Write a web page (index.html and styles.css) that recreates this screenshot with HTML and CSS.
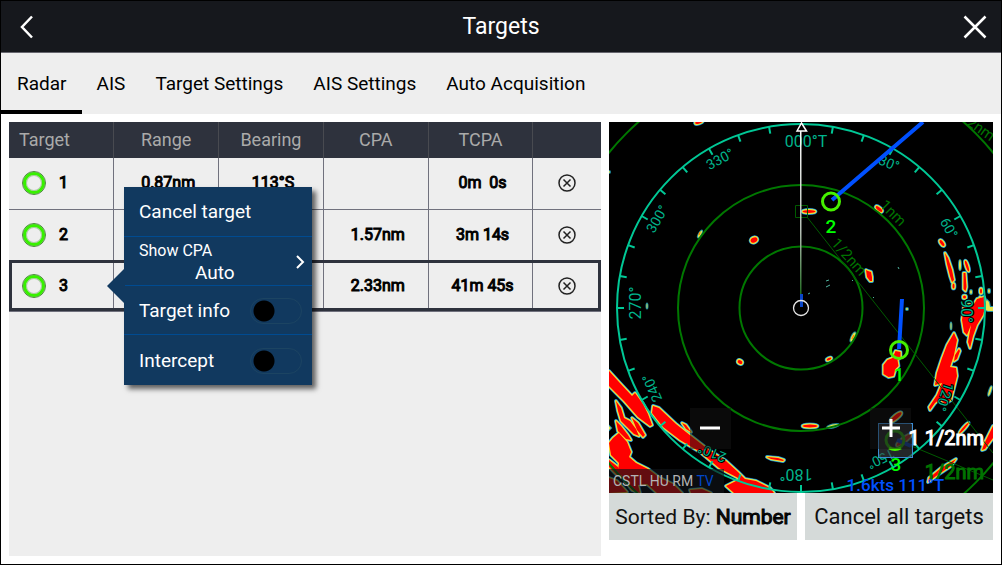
FILE: index.html
```html
<!DOCTYPE html>
<html lang="en">
<head>
<meta charset="utf-8">
<title>Targets</title>
<link rel="stylesheet" href="styles.css">
</head>
<body>
<header class="topbar">
  <button class="icon-btn" aria-label="Back"><svg width="36" height="36" viewBox="0 0 36 36"><path d="M23 7.500L13 18l10 10.500" fill="none" stroke="#fff" stroke-width="2.500"/></svg></button>
  <h1>Targets</h1>
  <button class="icon-btn" aria-label="Close"><svg width="36" height="36" viewBox="0 0 36 36"><path d="M7.500 7.500l21 21M28.500 7.500l-21 21" fill="none" stroke="#fff" stroke-width="2.500"/></svg></button>
</header>
<nav class="tabs">
  <a class="tab active" href="#radar">Radar</a>
  <a class="tab" href="#ais">AIS</a>
  <a class="tab" href="#target-settings">Target Settings</a>
  <a class="tab" href="#ais-settings">AIS Settings</a>
  <a class="tab" href="#auto">Auto Acquisition</a>
</nav>
<main class="content">
  <section class="list">
    <table class="targets">
      <colgroup><col class="data"><col class="data"><col class="data"><col class="data"><col class="data"><col></colgroup>
      <thead><tr><th class="first">Target</th><th>Range</th><th>Bearing</th><th>CPA</th><th>TCPA</th><th></th></tr></thead>
      <tbody>
        <tr>
          <td><span class="target"><i class="ring"></i>1</span></td><td>0.87nm</td><td>113°S</td><td></td><td>0m&nbsp; 0s</td>
          <td><button class="remove" aria-label="Cancel target 1"><svg width="18" height="18" viewBox="0 0 18 18"><circle cx="9" cy="9" r="8"/><path d="M5.500 5.500l7 7M12.500 5.500l-7 7"/></svg></button></td>
        </tr>
        <tr>
          <td><span class="target"><i class="ring"></i>2</span></td><td></td><td></td><td>1.57nm</td><td>3m 14s</td>
          <td><button class="remove" aria-label="Cancel target 2"><svg width="18" height="18" viewBox="0 0 18 18"><circle cx="9" cy="9" r="8"/><path d="M5.500 5.500l7 7M12.500 5.500l-7 7"/></svg></button></td>
        </tr>
        <tr class="selected">
          <td><span class="target"><i class="ring"></i>3</span></td><td></td><td></td><td>2.33nm</td><td>41m 45s</td>
          <td><button class="remove" aria-label="Cancel target 3"><svg width="18" height="18" viewBox="0 0 18 18"><circle cx="9" cy="9" r="8"/><path d="M5.500 5.500l7 7M12.500 5.500l-7 7"/></svg></button></td>
        </tr>
      </tbody>
    </table>
    <div class="popup">
      <button class="item">Cancel target</button>
      <button class="item cpa"><span class="stack"><small>Show CPA</small><span class="value">Auto</span></span><svg width="10" height="16" viewBox="0 0 10 16"><path d="M2 2l6 6-6 6" fill="none" stroke="#fff" stroke-width="2"/></svg></button>
      <label class="item">Target info<input class="switch" type="checkbox"></label>
      <label class="item">Intercept<input class="switch" type="checkbox"></label>
    </div>
  </section>
  <section class="side">
    <div class="radar">
      <svg class="scope" viewBox="609 122 384 371">
        <defs>
          <linearGradient id="heading" gradientUnits="userSpaceOnUse" x1="0" y1="130" x2="0" y2="300"><stop offset="0" stop-color="#fff"/><stop offset=".6" stop-color="#b4beb4"/><stop offset="1" stop-color="#146414"/></linearGradient>
          <g id="echoes">
            <ellipse cx="699" cy="122" rx="4" ry="1.500" transform="rotate(-20 699 122)"/>
            <ellipse cx="754" cy="240" rx="3.500" ry="2.500" transform="rotate(-25 754 240)"/>
            <ellipse cx="809" cy="211.500" rx="6.500" ry="1.500"/>
            <ellipse cx="879" cy="209" rx="4" ry="1.500" transform="rotate(40 879 209)"/>
            <path d="M866 270l2 1 3 1 1 5 0 4-2 0-3-4z"/>
            <ellipse cx="942" cy="243" rx="1.500" ry="3.500" transform="rotate(-35 942 243)"/>
            <path d="M945 253l3 5 4 12 2 10-2 2-2-6-3-12z"/>
            <ellipse cx="953.500" cy="286" rx="1" ry="2.500"/>
            <ellipse cx="967" cy="266" rx="1.200" ry="5.500" transform="rotate(-18 967 266)"/>
            <path d="M963.500 273l2 0 1 14-1 4-2-2z"/>
            <circle cx="964.500" cy="297" r="1.500"/>
            <ellipse cx="981" cy="291" rx="1" ry="2.500"/>
            <ellipse cx="740" cy="362" rx="2.500" ry="1.800" transform="rotate(30 740 362)"/>
            <path d="M767 457l11 1 6 2-1 1-12-2z"/>
            <ellipse cx="810" cy="426" rx="7.500" ry="1.500"/>
            <ellipse cx="829" cy="359" rx="2.500" ry="1" transform="rotate(-25 829 359)"/>
            <path d="M883.500 374l0-9 4-5 5-2 3-7 5 1 0 5-3 3 1 6-3 3-2 7-5 1z"/>
            <ellipse cx="896" cy="417" rx="7" ry="2" transform="rotate(-40 896 417)"/>
            <ellipse cx="904" cy="440" rx="9" ry="2" transform="rotate(-38 904 440)"/>
            <path d="M954 333L957 340L954 355L950 367L956 368L957 376L954 388L951 400L945 404L940 399L935 403L930 410L929 407L937 395L942 383L935 385L937 373L942 358L947 345Z"/>
            <path d="M959 349l1 2-3 8-3 2 1-6z"/>
            <path d="M964 305L974 304L977 299L984 297L986 304L983 315L977 325L973 336L970 348L968 342L971 325L967 335L964 332L962 320Z"/>
            <path d="M980 297l2 7 3 2-3 4-3-2z"/>
            <ellipse cx="964" cy="428" rx="1" ry="7" transform="rotate(42 964 428)"/>
            <path d="M993 426l0 12-8 11-3 1 2-6z"/>
            <path d="M956 459l-5 7-12 8-11 8 1-4 12-10z"/>
            <path d="M609 371L619 382L632 396L635 393L643 404L648 414L652 425L650 426L638 417L624 401L609 386Z"/>
            <path d="M653 406L659 408L676 424L691 436L709 450L726 461L738 472L745 479L756 481L770 488L774 493L734 493L726 486L740 479L719 468L700 452L680 440L663 427L652 413Z"/>
            <path d="M616 401L621 408L624 418L630 421L636 429L639 436L634 434L627 427L621 421L618 411Z"/>
            <path d="M632 418L638 423L645 435L643 437L637 430Z"/>
            <path d="M616 421L621 426L628 435L631 440L626 439L618 431Z"/>
            <path d="M609 443L613 438L619 433L627 442L631 452L629 457L636 463L648 469L660 478L673 484L682 493L657 493L647 484L638 485L640 493L632 490L624 479L618 471L619 463L611 455Z"/>
            <path d="M609 460l9 7 4 8-5 0-8-8z"/>
            <path d="M609 478l8 3 10 11-18 1z"/>
            <path d="M690 490l12-1 9 4-20 0z"/>
            <path d="M682 423l4 2 5 7-5-3z"/>
          </g>
          <g id="faint">
            <ellipse cx="700" cy="234" rx="1" ry="4" transform="rotate(30 700 234)"/>
            <ellipse cx="853" cy="337" rx="1.500" ry="5" transform="rotate(25 853 337)"/>
            <ellipse cx="960" cy="265" rx="1" ry="5"/><ellipse cx="971" cy="292" rx="1" ry="2"/><circle cx="609" cy="172" r="1"/><ellipse cx="647" cy="306" rx=".5" ry="2.500"/><circle cx="907" cy="309" r="1"/><ellipse cx="833" cy="426" rx="6" ry="1.500" transform="rotate(-14 833 426)"/><ellipse cx="990" cy="391" rx="1" ry="5" transform="rotate(18 990 391)"/><ellipse cx="951" cy="326" rx=".5" ry="3.500"/><path d="M987 300l2 2 1 5 3 0 0 4-5 0-5-2 2-5z"/><ellipse cx="989" cy="291" rx="1" ry="2"/><path d="M609 426v4l2-2z"/>
          </g>
        </defs>
        <rect x="609" y="122" width="384" height="371"/>
        <g><use href="#echoes" class="fringe"/><use href="#faint" class="halo"/><use href="#echoes" class="cyan"/><use href="#echoes" class="mid"/><use href="#faint" class="weak"/><use href="#echoes" class="core"/></g>
        <path d="M826 287l4-2M808 294l2-1M852 280l1 1M898 267l1 2M826 281l3-1M873 297l1 1" stroke="#50b4a0" fill="none"/>
        <path d="M700 232l-1 3M852 339l2-4" stroke="#ff8c00" stroke-width="1.500"/>
        <g class="range"><circle cx="801" cy="308" r="61.500"/><circle cx="801" cy="308" r="123"/><circle cx="801" cy="308" r="247"/></g>
        <g class="thin"><path d="M795.500 205.500h12v12h-12zM807 217L993 453M897 440L993 480"/></g>
        <circle class="compass" cx="801" cy="308" r="184"/>
        <g class="compass">
          <g id="quarter"><path d="M801 124v7"/><path d="M801 124v7" transform="rotate(10 801 308)"/><path d="M801 124v7" transform="rotate(20 801 308)"/><path d="M801 124v7" transform="rotate(30 801 308)"/><path d="M801 124v7" transform="rotate(40 801 308)"/><path d="M801 124v7" transform="rotate(50 801 308)"/><path d="M801 124v7" transform="rotate(60 801 308)"/><path d="M801 124v7" transform="rotate(70 801 308)"/><path d="M801 124v7" transform="rotate(80 801 308)"/></g>
          <use href="#quarter" transform="rotate(90 801 308)"/><use href="#quarter" transform="rotate(180 801 308)"/><use href="#quarter" transform="rotate(270 801 308)"/>
        </g>
        <g class="deg">
          <text x="806" y="147" class="big">000°T</text>
          <text transform="translate(889 163) rotate(22)" y="5">30°</text>
          <text transform="translate(949 228) rotate(60)" y="5">60°</text>
          <text transform="translate(967 311) rotate(90)" y="6" class="big">90°</text>
          <text transform="translate(945 397) rotate(108)" y="5">120°</text>
          <text transform="translate(881 459) rotate(154)" y="5">150°</text>
          <text transform="translate(796 475) rotate(180)" y="6" class="big">180°</text>
          <text transform="translate(712 453) rotate(202)" y="5">210°</text>
          <text transform="translate(652 388) rotate(246)" y="5">240°</text>
          <text transform="translate(635 303) rotate(270)" y="6" class="big">270°</text>
          <text transform="translate(657 219) rotate(300)" y="5">300°</text>
          <text transform="translate(720 159) rotate(332)" y="5">330°</text>
        </g>
        <g class="rangetext">
          <text transform="translate(849 257) rotate(48)" y="5">1/2nm</text>
          <text transform="translate(893 213) rotate(45)" y="5">1nm</text>
          <text transform="translate(981 129) rotate(35)" y="5">2nm</text>
        </g>
        <rect x="800" y="131" width="1.500" height="170" fill="url(#heading)"/>
        <path d="M797 131l4.500-8 5 8z" fill="#000" stroke="#fff" stroke-width="1.500"/>
        <path d="M801.500 294v13" stroke="#0a46c8" stroke-width="3"/>
        <circle cx="801" cy="308" r="7.500" fill="none" stroke="#e6e6e6" stroke-width="1.300"/>
        <g class="vector"><path d="M832 200L923 122M899 349L902 299"/></g>
        <rect x="878.500" y="423.500" width="34" height="34" fill="#3c4146" fill-opacity=".6" stroke="#3c8cd2"/>
        <path d="M897 440l14 6" stroke="#143c96" stroke-width="4"/>
        <g class="marks"><circle cx="831" cy="201.500" r="8.500"/><circle cx="899" cy="350" r="8.500"/><circle cx="895" cy="440" r="9" class="dim"/><path d="M889 448q6 3 12 0"/></g>
        <g class="ids"><text x="831" y="233">2</text><text x="899" y="381">1</text><text x="896" y="471">3</text></g>
        <rect x="609" y="469" width="115" height="24" fill="#101418" fill-opacity=".65"/>
        <text x="613" y="486" class="mode">CSTL HU RM <tspan fill="#0046c8">TV</tspan></text>
        <text x="984" y="479" class="scale green">1/2nm</text>
        <text x="944" y="491" class="speed">1.6kts 111°T</text>
      </svg>
      <button class="zoom out" aria-label="Zoom out"><svg width="20" height="20" viewBox="0 0 20 20"><path d="M0 10h20"/></svg></button>
      <button class="zoom in" aria-label="Zoom in"><svg width="20" height="20" viewBox="0 0 20 20"><path d="M1 10h18M10 1v18"/></svg></button>
      <span class="distance">1 1/2nm</span>
    </div>
    <div class="actions">
      <button>Sorted By: <b>Number</b></button>
      <button class="all">Cancel all targets</button>
    </div>
  </section>
</main>
</body>
</html>
```
FILE: styles.css
```css
* { box-sizing: border-box; }
body {
  margin: 0;
  min-height: 100vh;
  display: flex;
  flex-direction: column;
  border: 1px solid #000;
  background: #fff;
  color: #000;
  font: 18px/24px Roboto, sans-serif;
}
button { border: 0; padding: 0; background: none; color: inherit; font: inherit; }
svg { display: block; }
.topbar {
  height: 52px;
  padding: 0 8px;
  display: flex;
  align-items: center;
  justify-content: space-between;
  background: #16181d;
  color: #fff;
  border-bottom: 1px solid #66666e;
}
.topbar h1 { margin: 0; font-size: 23px; font-weight: 400; }
.tabs { display: flex; height: 61px; background: #eee; font-size: 19px; }
.tab { padding: 0 15px; line-height: 62px; color: #000; text-decoration: none; }
.tab.active { padding-left: 16px; border-bottom: 4px solid #000; }
.content {
  flex: 1;
  display: grid;
  grid-template-columns: 37fr 24fr;
  gap: 8px;
  padding: 8px;
}
.list { position: relative; background: #eee; min-width: 0; }
.targets { width: 100%; table-layout: fixed; border-collapse: collapse; }
.targets col.data { width: 17.7%; }
.targets th {
  height: 36px;
  padding: 0;
  background: #2e323d;
  color: #aaa;
  font-weight: 400;
  border-right: 1px solid #484a50;
}
.targets th.first { text-align: left; padding-left: 10px; }
.targets td {
  height: 51px;
  padding: 0 0 0 4px;
  font-size: 16px;
  text-align: center;
  border-right: 1px solid #70717d;
  border-bottom: 1px solid #70717d;
  -webkit-text-stroke: 1px #000;
}
.targets th:last-child, .targets td:last-child { border-right: 0; padding: 0; }
.targets .selected { outline: 3px solid #2e323d; outline-offset: -3px; }
.target { display: flex; align-items: center; gap: 14px; padding-left: 10px; }
.ring {
  width: 22px;
  height: 22px;
  border: 3px solid #38f000;
  border-radius: 50%;
  outline: 1px solid #4a8a3a;
  box-shadow: inset 0 0 0 1px #4a8a3a66;
}
.remove { display: block; margin: 0 auto; }
.remove svg { fill: none; stroke: #222; stroke-width: 1.5; }
.popup {
  position: absolute;
  left: 115px;
  top: 65px;
  width: 188px;
  background: #11395f;
  color: #fff;
  font-size: 19px;
  box-shadow: 4px 4px 5px #0009;
}
.popup::before {
  content: "";
  position: absolute;
  left: -17px;
  top: 81px;
  width: 18px;
  height: 36px;
  background: #11395f;
  clip-path: polygon(0 50%, 100% 0, 100% 100%);
}
.item {
  width: 100%;
  height: 49px;
  padding: 1px 10px 0 15px;
  display: flex;
  align-items: center;
  justify-content: space-between;
  border-bottom: 1px solid #004b91;
}
.item:first-child { height: 50px; }
.item:last-child { border: 0; height: 50px; }
.cpa { padding-right: 7px; }
.stack { display: flex; flex-direction: column; line-height: 22px; text-align: left; }
.stack small { font-size: 16px; }
.value { padding-left: 56px; }
.switch {
  appearance: none;
  width: 52px;
  height: 26px;
  margin: 0;
  border: 1px solid #1c4462;
  border-radius: 13px;
  background: radial-gradient(circle at 13px 12px, #000 10px, #0000 11px);
}
.side { min-width: 0; }
.radar { position: relative; }
.scope { width: 100%; }
.fringe { fill: #1464b4; stroke: #1464b4; stroke-width: 4; stroke-linejoin: round; }
.halo { fill: #1e8ca0; stroke: #1e8ca0; stroke-width: 2; }
.cyan { fill: #50dcc8; stroke: #50dcc8; stroke-width: 3; stroke-linejoin: round; }
.mid { fill: #ffdc28; stroke: #ffdc28; stroke-width: 2; stroke-linejoin: round; }
.weak { fill: #e6e650; }
.core { fill: #f00; }
.range { fill: none; stroke: #007800; stroke-width: 2; }
.thin { fill: none; stroke: #005a00; }
.compass { fill: none; stroke: #00c896; stroke-width: 2; }
.deg { fill: #00b48c; stroke: #000; stroke-width: 2; paint-order: stroke; font-size: 14px; text-anchor: middle; }
.big { font-size: 16px; }
.rangetext { fill: #007300; font-size: 15px; text-anchor: middle; }
.vector { stroke: #0050ff; stroke-width: 4; }
.marks { fill: none; stroke: #46f000; stroke-width: 3; }
.dim { stroke: #288c14; }
.ids { fill: #0f0; font-size: 19px; font-weight: 500; text-anchor: middle; }
.mode { fill: #b4b4b4; font-size: 14px; }
.scale { font-size: 20px; stroke-width: 1; text-anchor: end; }
.green { fill: #007300; stroke: #007300; }
.speed { fill: #0050ff; font-size: 17px; font-weight: 500; text-anchor: end; }
.distance {
  position: absolute;
  right: 9px;
  top: 82%;
  color: #fff;
  font-size: 20px;
  -webkit-text-stroke: 1px #fff;
}
.zoom {
  position: absolute;
  top: 77%;
  width: 41px;
  height: 41px;
  background: #14141480;
}
.zoom svg { margin: 0 auto; stroke: #fff; stroke-width: 3; }
.out { left: 21%; }
.in { left: 68%; }
.actions { display: grid; grid-template-columns: 1fr 1fr; gap: 8px; }
.actions button {
  height: 47px;
  background: #d5dad9;
  color: #111;
  font-size: 21px;
  white-space: nowrap;
}
.actions .all { font-size: 22px; }
.actions b { font-weight: 400; -webkit-text-stroke: 1px #000; }
```
